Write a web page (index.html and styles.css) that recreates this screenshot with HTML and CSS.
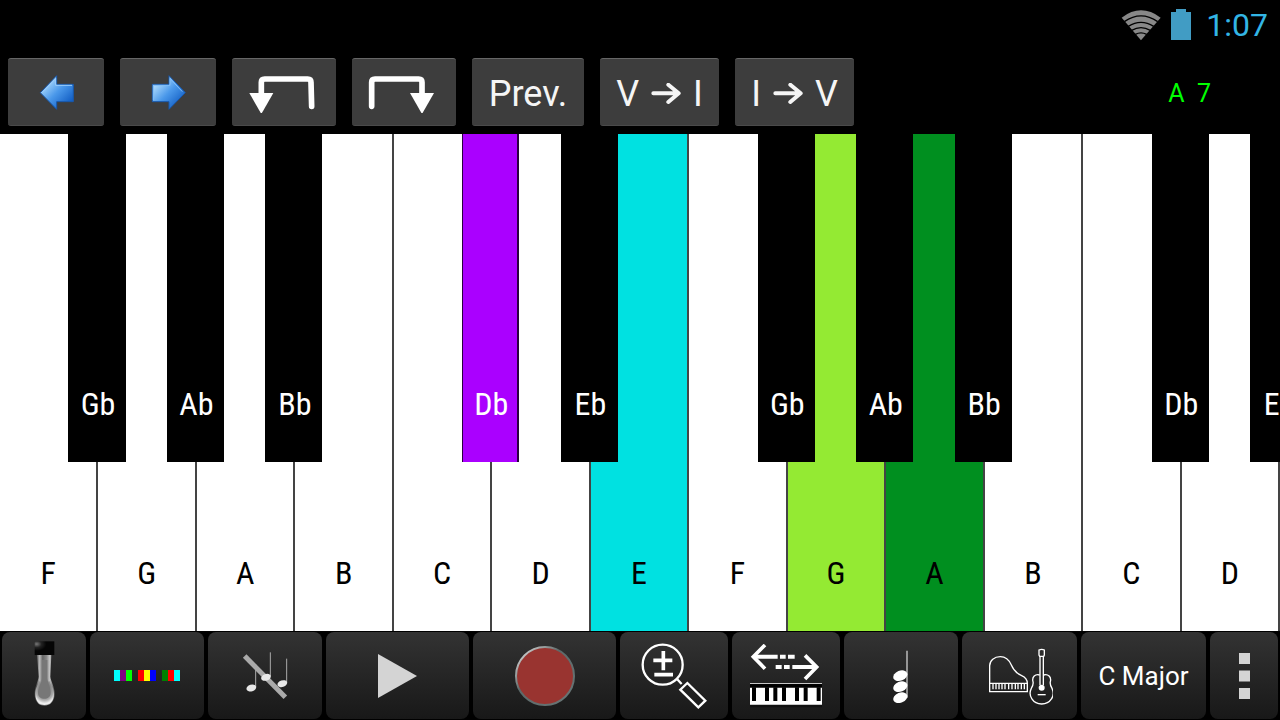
FILE: index.html
```html
<!DOCTYPE html>
<html lang="en">
<head>
    <meta charset="UTF-8">
    <meta name="viewport" content="width=device-width, initial-scale=1.0">
    <title>Piano Chords</title>
    <link rel="stylesheet" href="styles.css">
</head>
<body>
    <header class="status-bar">
        <svg class="wifi" width="40" height="32" viewBox="0 0 120 96" aria-hidden="true">
            <path d="M60 94L2 26Q60-18 119 26Z" fill="#888"/>
            <g fill="none" stroke="#000" stroke-width="4">
                <path d="M10 38Q60 3 110 38"/>
                <path d="M22 52Q60 28 98 52"/>
                <path d="M32 64Q60 48 88 64"/>
                <path d="M43 76Q60 67 77 76"/>
            </g>
        </svg>
        <svg class="battery" width="20" height="32" viewBox="0 0 20 32" aria-hidden="true">
            <path d="M5 0H15V3H20V31H0V3H5Z" fill="#419cc4"/>
        </svg>
        <span class="clock">1:07</span>
    </header>

    <div class="toolbar">
        <button class="tool-btn" aria-label="Left">
            <svg width="36" height="36" viewBox="0 0 108 108">
                <defs>
                    <linearGradient id="blue" x1="0" y1="0" x2="1" y2="1">
                        <stop offset="0.2" stop-color="#a5d5fb"/>
                        <stop offset="0.5" stop-color="#4a98ea"/>
                        <stop offset="0.85" stop-color="#135fc4"/>
                    </linearGradient>
                </defs>
                <path d="M7 56L56 5V31H106V83H56V106Z" fill="url(#blue)" stroke="#1858ac" stroke-width="3"/>
                <path d="M14 54L53 14V34H102" fill="none" stroke="#9bcdfa" stroke-width="3"/>
            </svg>
        </button>
        <button class="tool-btn" aria-label="Right">
            <svg width="36" height="36" viewBox="0 0 108 108">
                <path d="M106 56L57 5V31H7V83H57V106Z" fill="url(#blue)" stroke="#1858ac" stroke-width="3"/>
                <path d="M10 78V34H60V14L97 53" fill="none" stroke="#7fbcf6" stroke-width="3"/>
            </svg>
        </button>
        <button class="tool-btn wide" aria-label="Undo">
            <svg width="74" height="42" viewBox="0 0 222 126">
                <path d="M194 106L192 34Q192 24 182 24H53Q43 24 43 34V70" fill="none" stroke="#fff" stroke-width="17" stroke-linecap="round"/>
                <path d="M7 66H79L43 129Z" fill="#fff"/>
            </svg>
        </button>
        <button class="tool-btn wide" aria-label="Redo">
            <svg width="74" height="42" viewBox="0 0 222 126">
                <path d="M14 106V34Q14 24 24 24H155Q165 24 165 34V70" fill="none" stroke="#fff" stroke-width="17" stroke-linecap="round"/>
                <path d="M129 66H201L165 129Z" fill="#fff"/>
            </svg>
        </button>
        <button class="tool-btn text">Prev.</button>
        <button class="tool-btn text chord" aria-label="V to I">
            <span>V</span>
            <svg width="30" height="22" viewBox="0 0 90 66">
                <path d="M7 31H80M52 5L83 31L52 57" fill="none" stroke="#f5f5f5" stroke-width="12" stroke-linecap="round" stroke-linejoin="round"/>
            </svg>
            <span>I</span>
        </button>
        <button class="tool-btn text chord" aria-label="I to V">
            <span>I</span>
            <svg width="30" height="22" viewBox="0 0 90 66">
                <path d="M7 31H80M52 5L83 31L52 57" fill="none" stroke="#f5f5f5" stroke-width="12" stroke-linecap="round" stroke-linejoin="round"/>
            </svg>
            <span>V</span>
        </button>
        <div class="chord-name">A  7</div>
    </div>

    <main class="piano">
        <div class="key">
            <button class="white">F</button>
            <button class="black">Gb</button>
        </div>
        <div class="key">
            <button class="white">G</button>
            <button class="black">Ab</button>
        </div>
        <div class="key">
            <button class="white">A</button>
            <button class="black">Bb</button>
        </div>
        <div class="key">
            <button class="white">B</button>
        </div>
        <div class="key">
            <button class="white">C</button>
            <button class="black purple">Db</button>
        </div>
        <div class="key">
            <button class="white">D</button>
            <button class="black">Eb</button>
        </div>
        <div class="key">
            <button class="white cyan">E</button>
        </div>
        <div class="key">
            <button class="white">F</button>
            <button class="black">Gb</button>
        </div>
        <div class="key">
            <button class="white lime">G</button>
            <button class="black">Ab</button>
        </div>
        <div class="key">
            <button class="white green">A</button>
            <button class="black">Bb</button>
        </div>
        <div class="key">
            <button class="white">B</button>
        </div>
        <div class="key">
            <button class="white">C</button>
            <button class="black">Db</button>
        </div>
        <div class="key">
            <button class="white">D</button>
            <button class="black">Eb</button>
        </div>
    </main>

    <footer class="bottom-bar">
        <button class="bar-btn" aria-label="Slide">
            <svg width="24" height="72" viewBox="0 0 72 216">
                <defs>
                    <linearGradient id="glass" x1="0" x2="1" y1="0" y2="0">
                        <stop offset="0.1" stop-color="#555"/>
                        <stop offset="0.25" stop-color="#bbb"/>
                        <stop offset="0.4" stop-color="#666"/>
                        <stop offset="0.6" stop-color="#888"/>
                        <stop offset="0.75" stop-color="#c4c4c4"/>
                        <stop offset="0.95" stop-color="#666"/>
                    </linearGradient>
                    <radialGradient id="shine" cx="0.1" cy="0.2" r="0.5">
                        <stop offset="0" stop-color="#777"/>
                        <stop offset="0.5" stop-color="#222"/>
                        <stop offset="1" stop-color="#050505"/>
                    </radialGradient>
                    <radialGradient id="bulb" cx="0.5" cy="0.3" r="0.7">
                        <stop offset="0.3" stop-color="#777"/>
                        <stop offset="0.7" stop-color="#aaa"/>
                        <stop offset="0.9" stop-color="#eee"/>
                    </radialGradient>
                </defs>
                <path d="M15 44L20 110C18 125 8 140 8 162C8 184 20 197 37 197C54 197 68 184 68 162C68 140 57 125 55 110L58 44Z" fill="url(#glass)"/>
                <path d="M22 124C16 138 10 146 10 162C10 184 22 195 37 195C52 195 66 184 66 162C66 146 58 138 53 124Z" fill="url(#bulb)"/>
                <path d="M30 60L30 115C28 132 18 142 18 158C18 170 27 176 37 176C47 176 56 170 56 158C56 142 48 132 46 115V60Z" fill="#777"/>
                <rect x="8" y="4" width="59" height="41" fill="url(#shine)"/>
            </svg>
        </button>
        <button class="bar-btn" aria-label="Key colors">
            <svg width="66" height="11" viewBox="0 0 11 2" preserveAspectRatio="none" shape-rendering="crispEdges">
                <path d="M0 0h1v2h-1z" fill="#0ff"/>
                <path d="M1 0h1v2h-1z" fill="#800080"/>
                <path d="M2 0h1v2h-1z" fill="#0f0"/>
                <path d="M4 0h1v2h-1z" fill="#f00"/>
                <path d="M5 0h1v2h-1z" fill="#ff0"/>
                <path d="M6 0h1v2h-1z" fill="#00f"/>
                <path d="M8 0h1v2h-1z" fill="#008000"/>
                <path d="M9 0h1v2h-1z" fill="#f00"/>
                <path d="M10 0h1v2h-1z" fill="#0ff"/>
            </svg>
        </button>
        <button class="bar-btn" aria-label="Notes off">
            <svg width="48" height="48" viewBox="0 0 144 144">
                <path d="M11 12L133 136" stroke="#aaa" stroke-width="15"/>
                <path d="M44 36V105M88 1V73M137 20V92" stroke="#aaa" stroke-width="3"/>
                <g fill="#e8e8e8">
                    <ellipse cx="31" cy="108" rx="15" ry="10" transform="rotate(-18 31 108)"/>
                    <ellipse cx="75" cy="76" rx="15" ry="10" transform="rotate(-18 75 76)"/>
                    <ellipse cx="124" cy="95" rx="15" ry="10" transform="rotate(-18 124 95)"/>
                </g>
            </svg>
        </button>
        <button class="bar-btn" aria-label="Play">
            <svg width="40" height="44" viewBox="0 0 40 44">
                <path d="M0 0L39 22L0 44Z" fill="#d4d4d4"/>
            </svg>
        </button>
        <button class="bar-btn" aria-label="Record">
            <svg width="62" height="62" viewBox="0 0 62 62">
                <defs>
                    <linearGradient id="ring" x1="0" y1="0" x2="1" y2="1">
                        <stop offset="0.1" stop-color="#ccc"/>
                        <stop offset="0.4" stop-color="#5c6868"/>
                        <stop offset="1" stop-color="#6a7777"/>
                    </linearGradient>
                </defs>
                <circle cx="31" cy="31" r="29" fill="#993430" stroke="url(#ring)" stroke-width="2"/>
            </svg>
        </button>
        <button class="bar-btn" aria-label="Zoom">
            <svg width="66" height="66" viewBox="0 0 198 198">
                <g fill="none" stroke="#fff">
                    <circle cx="65" cy="65" r="60" stroke-width="7"/>
                    <path d="M67 24V82M37 52H94M40 95H96" stroke-width="11"/>
                    <path d="M108 108L122 123" stroke-width="7"/>
                    <path d="M139 120L193 173L172 193L118 140Z" stroke-width="7"/>
                </g>
            </svg>
        </button>
        <button class="bar-btn" aria-label="Scroll keyboard">
            <svg width="74" height="64" viewBox="0 0 222 192">
                <g fill="none" stroke="#fff">
                    <path d="M48 3L13 38L48 74M168 34L203 69L168 105" stroke-width="11"/>
                    <path d="M14 38H86M93 38H110M117 38H137M80 69H98M105 69H122M130 69H202" stroke-width="12"/>
                </g>
                <path d="M3 182H219V190H3Z" fill="#111"/>
                <path d="M3 118H219V182H3Z" fill="#fff"/>
                <path d="M3 120H219V131H3Z"/>
                <path d="M9 130h12v41h-12zM48 130h12v41h-12zM73 130h12v41h-12zM99 130h12v41h-12zM138 130h12v41h-12zM164 130h12v41h-12zM203 130h12v41h-12z"/>
            </svg>
        </button>
        <button class="bar-btn" aria-label="Chord">
            <svg width="16" height="54" viewBox="0 0 48 162">
                <path d="M42 5V146" stroke="#ccc" stroke-width="4"/>
                <g fill="#fff">
                    <ellipse cx="22" cy="80" rx="22" ry="15" transform="rotate(-22 22 80)"/>
                    <ellipse cx="22" cy="113" rx="22" ry="15" transform="rotate(-22 22 113)"/>
                    <ellipse cx="22" cy="146" rx="22" ry="15" transform="rotate(-22 22 146)"/>
                </g>
            </svg>
        </button>
        <button class="bar-btn" aria-label="Instrument">
            <svg width="66" height="58" viewBox="0 0 198 174">
                <g fill="none" stroke="#fff" stroke-width="4">
                    <path d="M8 109V56C8 40 22 29 40 29C56 29 66 38 73 54C81 73 90 80 104 86C115 91 121 97 121 109V134H8ZM8 109H121"/>
                    <path d="M18 110V127M27 110V127M36 110V127M45 110V127M54 110V127M65 110V127M75 110V127M85 110V127M93 110V127M103 110V127M112 110V127"/>
                    <path d="M159 84V30L156 24V9Q164 5 172 9V24L169 30V114M159 84V114M156 28H172"/>
                    <path d="M158 84C145 80 134 90 138 104C140 112 137 117 133 124C122 146 138 171 164 171C190 171 206 146 195 124C191 117 188 112 190 104C194 90 183 80 170 84"/>
                    <path d="M152 143H176"/>
                </g>
                <circle cx="164" cy="122" r="9" fill="#fff"/>
            </svg>
        </button>
        <button class="bar-btn">C Major</button>
        <button class="bar-btn" aria-label="More">
            <svg width="11" height="46" viewBox="0 0 11 46">
                <path d="M0 0H11V11H0ZM0 17.5H11V28.5H0ZM0 35H11V46H0Z" fill="#d4d4d4"/>
            </svg>
        </button>
    </footer>
</body>
</html>
```

FILE: styles.css
```css
body {
    display: flex;
    flex-direction: column;
    height: 100vh;
    margin: 0;
    font-family: Roboto, "Noto Sans", sans-serif;
    background-color: #000;
    color: #fff;
    overflow: hidden;
}

button {
    border: none;
    margin: 0;
    padding: 0;
    font-family: inherit;
    color: inherit;
    cursor: pointer;
}

svg {
    display: block;
    flex-shrink: 0;
}

/* status bar */
.status-bar {
    display: flex;
    justify-content: flex-end;
    align-items: center;
    height: 50px;
    padding-right: 12px;
}

.battery {
    margin-left: 10px;
}

.clock {
    margin-left: 15px;
    font-size: 32px;
    color: #33b5e5;
}

/* toolbar */
.toolbar {
    display: flex;
    align-items: center;
    gap: 16px;
    padding: 8px;
}

.tool-btn {
    display: flex;
    justify-content: center;
    align-items: center;
    gap: 12px;
    box-sizing: border-box;
    min-width: 96px;
    height: 68px;
    border-top: 1px solid #666;
    border-bottom: 1px solid #4a4a4a;
    border-radius: 3px;
    background-color: #3d3d3d;
    color: #f5f5f5;
    font-size: 36px;
}

.tool-btn.wide {
    min-width: 104px;
}

.tool-btn.text {
    min-width: 112px;
    padding-top: 4px;
}

.tool-btn.chord {
    min-width: 119px;
}

.chord-name {
    margin-left: auto;
    padding: 2px 61px 0 0;
    font-size: 25px;
    white-space: pre;
    color: #0f0;
}

/* keyboard */
.piano {
    display: flex;
    flex: 1;
    min-height: 0;
    overflow: hidden;
}

.key {
    position: relative;
    flex: 1;
    min-width: 0;
}

.white,
.black {
    display: flex;
    justify-content: center;
    align-items: flex-end;
    padding-bottom: 40px;
    font-family: "Roboto Condensed", "Liberation Sans Narrow", Roboto, sans-serif;
    font-size: 32px;
    line-height: 36px;
}

.white {
    width: 100%;
    height: 100%;
    border-right: 2px solid #444;
    background-color: #fff;
    color: #000;
}

.black {
    position: absolute;
    top: 0;
    right: -27.5%;
    z-index: 1;
    width: 58%;
    height: 66%;
    padding-left: 2px;
    background-color: #000;
    color: #fff;
}

.white.cyan {
    background-color: #00e1e1;
}

.white.lime {
    background-color: #94ea33;
}

.white.green {
    background-color: #008f1f;
}

.black.purple {
    border: solid #2a0040;
    border-width: 0 2px 0 1px;
    background-color: #a0f;
}

/* bottom bar */
.bottom-bar {
    display: grid;
    grid-template-columns: 84fr 114fr 114fr 143fr 143fr 108fr 108fr 114fr 115fr 125fr 68fr;
    gap: 4px;
    padding: 1px 2px;
}

.bar-btn {
    display: flex;
    justify-content: center;
    align-items: center;
    height: 87px;
    border-radius: 8px;
    background: linear-gradient(#333, #181818);
    font-size: 26px;
    white-space: nowrap;
}
```
